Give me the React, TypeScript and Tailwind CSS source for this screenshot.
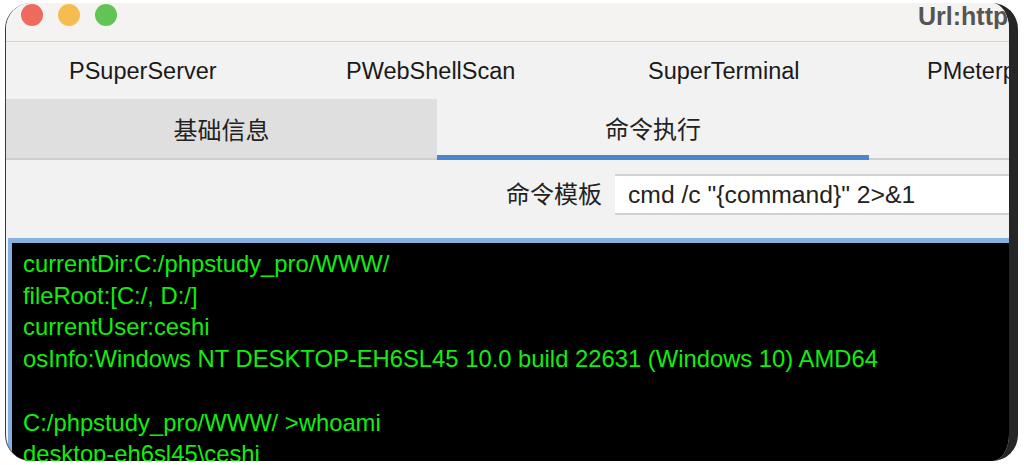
const outerTabs = ['PSuperServer', 'PWebShellScan', 'SuperTerminal', 'PMeterpreter'];

const outputLines = [
  'currentDir:C:/phpstudy_pro/WWW/',
  'fileRoot:[C:/, D:/]',
  'currentUser:ceshi',
  'osInfo:Windows NT DESKTOP-EH6SL45 10.0 build 22631 (Windows 10) AMD64',
  '\u00a0',
  'C:/phpstudy_pro/WWW/ >whoami',
  'desktop-eh6sl45\\ceshi',
];

const sans = "font-['Liberation_Sans','Noto_Sans_CJK_SC',sans-serif]";

export default function App() {
  return (
    <div className={`h-[465px] w-[1024px] overflow-hidden bg-white pt-[3px] pb-[4px] pl-[5px] pr-[6px] ${sans}`}>
      <div className="flex h-full w-full flex-col overflow-hidden rounded-[26px] border-r-[9px] border-l-[1px] border-r-[#262626] border-l-[#3a3a3a] bg-[#f2f2f2]">
        <div className="flex h-[39px] shrink-0 items-start border-b border-[#d4d4d4] bg-[#f5f3f2]">
          <div className="flex items-center gap-[15px] pl-[15px] pt-[1px]">
            <span className="h-[22px] w-[22px] rounded-full bg-[#ee6a5f]" />
            <span className="h-[22px] w-[22px] rounded-full bg-[#f5bd4f]" />
            <span className="h-[22px] w-[22px] rounded-full bg-[#61c454]" />
          </div>
          <div className="ml-[801px] min-w-0 flex-1 overflow-hidden whitespace-nowrap text-[25px] leading-[26px] font-bold text-[#555555]">
            Url:http
          </div>
        </div>

        <div className="flex h-[57px] shrink-0 items-center overflow-hidden whitespace-nowrap pt-[2px] text-[23.5px] text-[#1a1a1a]">
          <div className="w-[273px] shrink-0 pl-[63px]">{outerTabs[0]}</div>
          <div className="w-[302px] shrink-0 pl-[67px]">{outerTabs[1]}</div>
          <div className="w-[346px] shrink-0 pl-[67px]">{outerTabs[2]}</div>
          <div className="shrink-0">{outerTabs[3]}</div>
        </div>

        <div className="flex h-[61px] shrink-0 border-b-[2px] border-[#cfcfcf] text-[24px] text-[#222222]">
          <div className="flex w-[431px] items-center justify-center bg-[#dfdfdf] pt-[4px]">基础信息</div>
          <div className="-mb-[2px] flex w-[432px] items-center justify-center border-b-[5px] border-[#4a86cf] pt-[6px]">命令执行</div>
        </div>

        <div className="flex h-[78px] shrink-0 items-start pt-[14px]">
          <div className="w-[609px] shrink-0 pr-[13px] text-right text-[24px] leading-[41px] text-[#222222]">命令模板</div>
          <div className="h-[41px] flex-1 overflow-hidden whitespace-nowrap border-y-[2px] border-[#d2d2d2] bg-white pl-[13px] text-[24.7px] leading-[38px] text-[#222222]">
            cmd /c "{'{command}'}" 2&gt;&amp;1
          </div>
        </div>

        <div className="ml-[2px] min-h-0 flex-1 overflow-hidden border-t-[5px] border-l-[4px] border-[#85b0e0] bg-black pl-[11px] pt-[5px] text-[23.8px] leading-[31.7px] text-[#10ee10]">
          {outputLines.map((line, i) => (
            <div key={i} className="whitespace-nowrap">{line}</div>
          ))}
        </div>
      </div>
    </div>
  );
}
